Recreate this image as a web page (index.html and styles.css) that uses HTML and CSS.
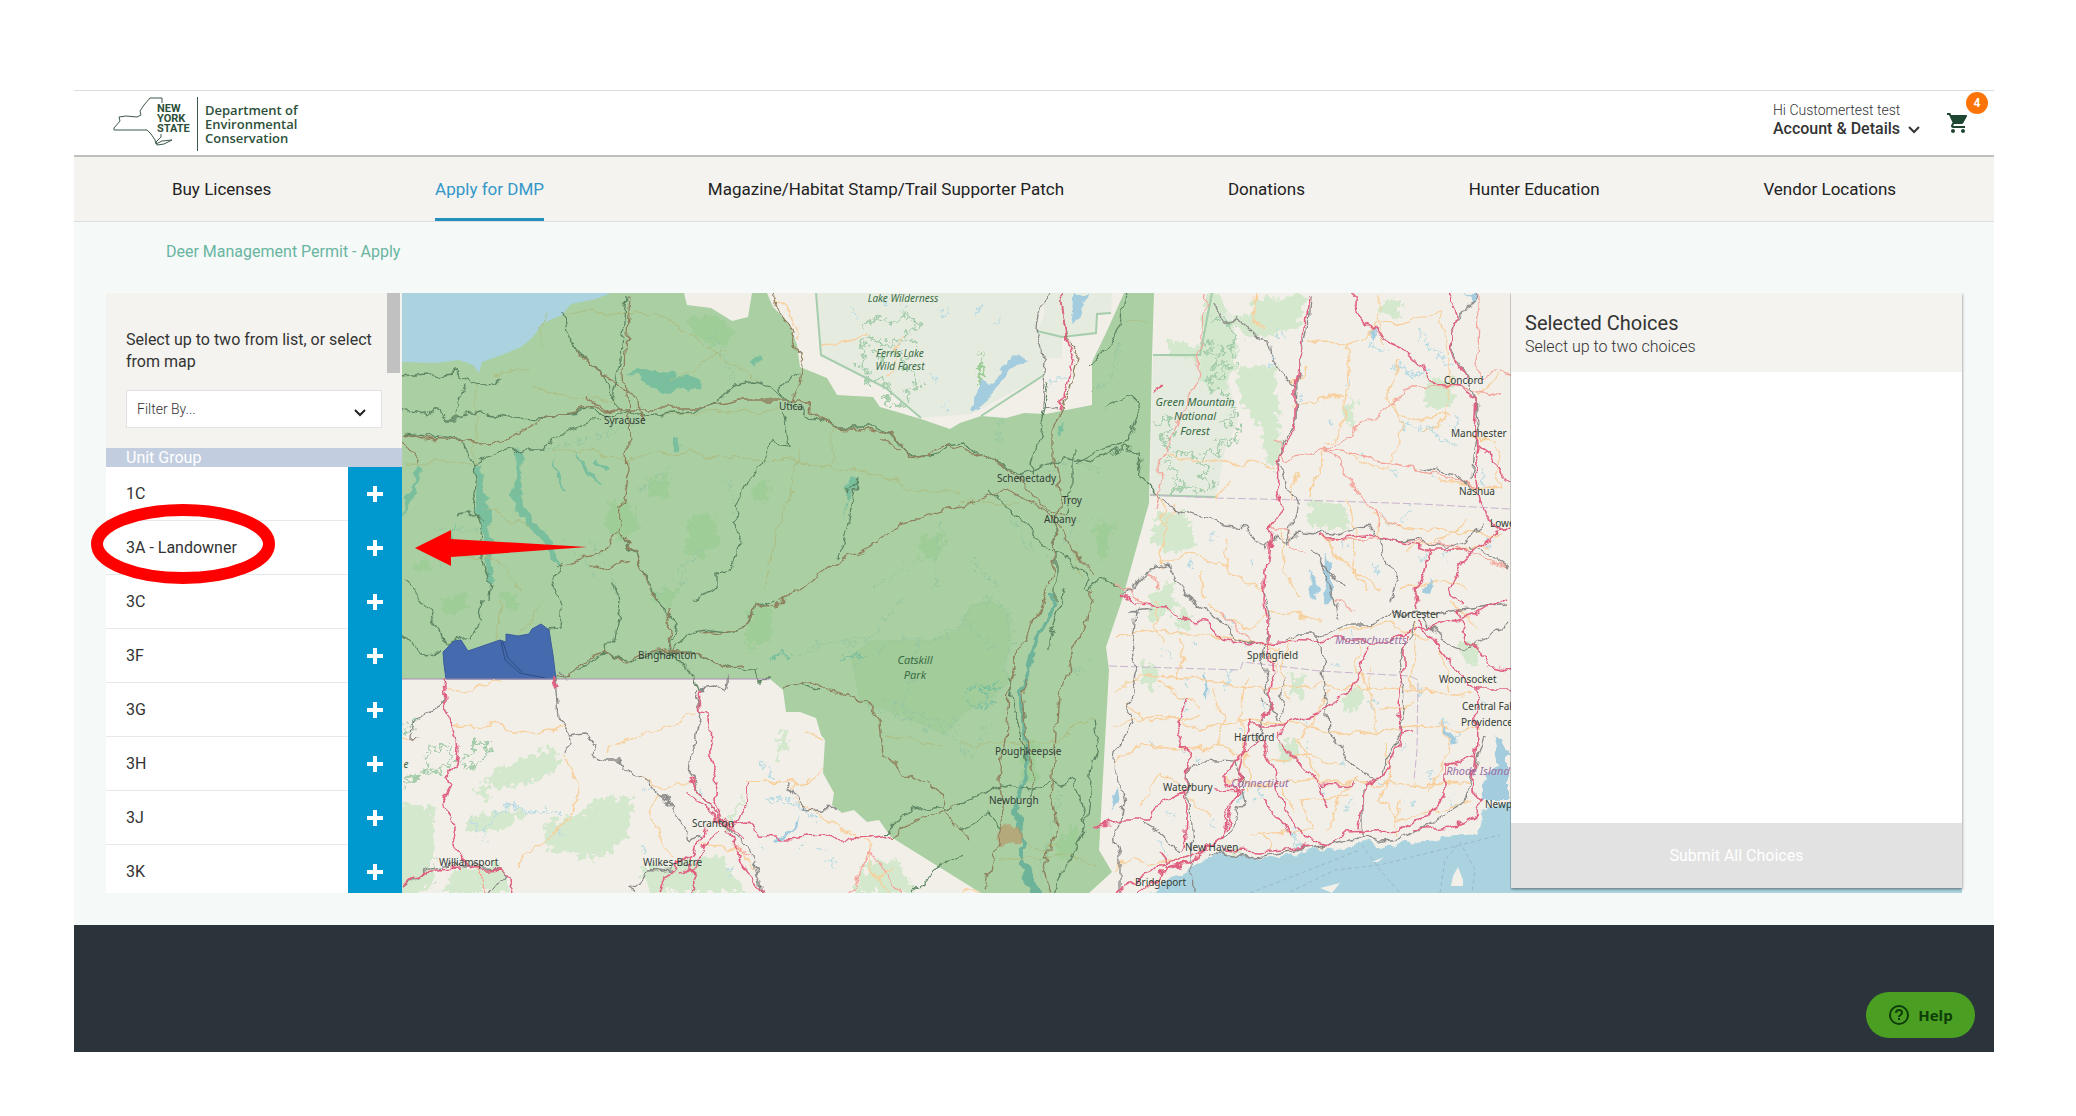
FILE: index.html
```html
<!DOCTYPE html>
<html lang="en">
<head>
    <meta charset="UTF-8">
    <title>Deer Management Permit - Apply</title>
    <link rel="stylesheet" href="styles.css">
</head>
<body>
<div class="page">
    <header class="header">
        <a href="#" class="logo">
            <svg class="logo-state" width="80" height="54" viewBox="0 0 80 54">
                <path d="M49 6V1H37L31 8L27 14L28 18L24 20L13 19L6 20L7 24L1 31V33H34L38 37L42 43L43 47L49 44L59 43L51 47L44 48L43 45L48 40V37" fill="none" stroke="#3d5a47" stroke-width="1"/>
                <text x="44" y="15">NEW</text>
                <text x="44" y="25">YORK</text>
                <text x="44" y="35">STATE</text>
            </svg>
            <span class="logo-name">Department of<br>Environmental<br>Conservation</span>
        </a>
        <div class="account">
            <button type="button" class="account-btn">
                <span class="hello">Hi Customertest test</span>
                <span class="details">Account &amp; Details
                    <svg width="12" height="8" viewBox="0 0 12 8"><path d="M1 1L6 6L11 1" fill="none" stroke="#333" stroke-width="2"/></svg>
                </span>
            </button>
            <a href="#" class="cart" aria-label="Cart">
                <svg width="24" height="24" viewBox="0 0 24 24"><path fill="#1e4630" d="M7 18c-1.1 0-1.99.9-1.99 2S5.900 22 7 22s2-.9 2-2-.9-2-2-2zM1 2v2h2l3.600 7.590-1.350 2.450c-.16.28-.25.61-.25.96 0 1.100.9 2 2 2h12v-2H7.420c-.14 0-.25-.11-.25-.25l.03-.12.9-1.630h7.450c.75 0 1.410-.41 1.750-1.030l3.580-6.490A1 1 0 0 0 20 4H5.210l-.94-2H1zm16 16c-1.100 0-1.990.9-1.990 2s.89 2 1.990 2 2-.9 2-2-.9-2-2-2z"/></svg>
                <span class="badge">4</span>
            </a>
        </div>
    </header>
    <nav class="nav">
        <a href="#">Buy Licenses</a>
        <a href="#" class="active">Apply for DMP</a>
        <a href="#">Magazine/Habitat Stamp/Trail Supporter Patch</a>
        <a href="#">Donations</a>
        <a href="#">Hunter Education</a>
        <a href="#">Vendor Locations</a>
    </nav>
    <main class="main">
        <h1>Deer Management Permit - Apply</h1>
        <div class="workspace">
            <div class="sidebar">
                <div class="filter">
                    <label for="filter">Select up to two from list, or select from map</label>
                    <div class="select-box">
                        <select id="filter">
                            <option>Filter By...</option>
                        </select>
                        <svg width="12" height="8" viewBox="0 0 12 8"><path d="M1 1L6 6L11 1" fill="none" stroke="#222" stroke-width="2"/></svg>
                    </div>
                </div>
                <div class="thumb"></div>
                <h2>Unit Group</h2>
                <ul class="units">
                    <li><span>1C</span><button type="button" aria-label="Add 1C"></button></li>
                    <li><span>3A - Landowner</span><button type="button" aria-label="Add 3A - Landowner"></button></li>
                    <li><span>3C</span><button type="button" aria-label="Add 3C"></button></li>
                    <li><span>3F</span><button type="button" aria-label="Add 3F"></button></li>
                    <li><span>3G</span><button type="button" aria-label="Add 3G"></button></li>
                    <li><span>3H</span><button type="button" aria-label="Add 3H"></button></li>
                    <li><span>3J</span><button type="button" aria-label="Add 3J"></button></li>
                    <li><span>3K</span><button type="button" aria-label="Add 3K"></button></li>
                </ul>
            </div>
            <div class="map">
                <svg viewBox="402 293 1560 600" preserveAspectRatio="xMinYMin slice">
                    <!-- makes roads, streams and shores wander like surveyed lines -->
                    <filter id="wander" filterUnits="userSpaceOnUse" x="392" y="283" width="1580" height="620">
                        <feTurbulence type="fractalNoise" baseFrequency="0.06" numOctaves="3" seed="4"/>
                        <feDisplacementMap in="SourceGraphic" scale="14" xChannelSelector="R" yChannelSelector="G"/>
                    </filter>
                    <filter id="wander-fine" filterUnits="userSpaceOnUse" x="392" y="283" width="1580" height="620">
                        <feTurbulence type="fractalNoise" baseFrequency="0.14" numOctaves="3" seed="9"/>
                        <feDisplacementMap in="SourceGraphic" scale="18" xChannelSelector="R" yChannelSelector="G"/>
                    </filter>
                    <rect x="402" y="293" width="1560" height="600" fill="#f2efe9"/>
                    <!-- parks and woods outside the units -->
                    <path class="park" d="M816 293L821 355L886 388L921 418L972 414L1044 375L1046 355L1037 331L1040 310L1048 293Z"/>
                    <path class="park" d="M1044 293V315L1037 331L1046 358H1062V337L1096 333L1097 314L1111 313L1112 293Z"/>
                    <path class="park" d="M1153 355H1200L1212 293L1232 315L1236 345L1228 378L1238 420L1225 450L1216 497L1150 495Z"/>
                    <g class="wood" filter="url(#wander-fine)">
                        <path d="M1225 320L1250 314L1255 300L1310 296L1295 330L1255 340ZM1236 368L1275 366L1278 410L1280 455L1268 470L1262 430L1240 400ZM1170 340L1200 345L1198 362L1170 358Z"/>
                        <path d="M1205 296L1224 294L1221 316L1234 335L1238 355L1228 385L1214 392L1199 380L1202 345ZM1160 510L1190 515L1195 545L1165 555L1150 540ZM1310 500L1345 505L1350 530L1308 527ZM1150 595L1173 580L1178 608L1150 625Z"/>
                        <path d="M392 805H433V885L392 903ZM480 780L518 760L550 748L562 765L540 780L500 788ZM475 790L490 785L488 800L474 795ZM465 820L505 810L530 812L500 830L468 832ZM543 825L580 815L600 795L633 798L628 835L600 860L550 852ZM455 870L500 862L510 893H440ZM640 868L720 855L745 893H650ZM780 735L790 728L786 750L775 760ZM853 893L870 860L900 862L915 893ZM740 800L748 790L735 820L722 835Z"/>
                        <path d="M1340 700L1360 685L1362 705L1350 712ZM1278 745L1295 740L1298 760L1282 762ZM1290 675L1305 678L1302 700L1292 695ZM1178 615L1190 605L1188 632L1176 630ZM1460 640L1480 645L1476 668L1464 662ZM1425 380L1455 378L1450 410L1425 408ZM1345 405L1355 400L1352 425L1344 420ZM1385 300H1400V318L1380 312ZM1140 660L1160 668L1155 690L1142 684ZM1225 850L1240 845L1238 862ZM1285 300L1300 298L1298 325L1286 330Z"/>
                    </g>
                    <g class="edge">
                        <path d="M816 293L821 355L886 388L921 418M981 416L1044 375M1153 355H1200L1212 293M1037 331L1062 337L1096 333L1097 314L1111 313M1216 497L1150 495"/>
                    </g>
                    <g class="edge" filter="url(#wander-fine)">
                        <path d="M861 327L880 317L895 324L907 315L920 325L905 335L917 342L898 340L885 345L870 337L860 345L866 355L858 365L870 372L865 385L880 380L892 390L886 402L902 408L910 398L905 388L920 385L915 372L902 370L905 358L893 352L880 358L872 350"/>
                        <path d="M1202 345L1213 340L1207 355L1220 350L1214 368L1228 362L1222 378L1206 375L1212 388L1228 395L1236 412L1222 422L1240 430L1232 447L1217 440L1220 455L1205 452L1198 462L1212 468L1200 478L1215 485L1196 492L1182 484L1172 495L1178 470L1165 462L1180 452L1195 458M1212 320L1224 318L1236 335L1230 350L1238 362M1155 425L1166 417L1173 430L1160 440L1172 448"/>
                        <path d="M402 785L428 770L426 752L450 745L455 757L440 770L402 780M404 725L415 718L414 730L402 735M461 765L475 745L490 742L480 760L468 768M483 760L494 748"/>
                    </g>
                    <g class="speck" filter="url(#wander-fine)">
                        <path d="M1180 400l4 3M1190 560l3 6M1210 540l5 -4M1250 560l4 4M1300 400l6 -5M1330 420l5 6M1350 380l-4 6M1390 370l10 -6l5 8l8 -3M1370 340l5 8l10 3M1395 365l20 12l15 -8M1420 330l8 18l15 10l8 12M1400 420l12 8l18 -2l10 14l20 6M1390 470l6 5M1430 470l10 8M1460 420l-8 10M1480 470l4 16M1410 510l-8 14M1385 520l8 4M1340 540l5 8M1375 560l3 12M1420 560l8 -6M1450 545l-6 14M1490 540l-4 10M1270 350l5 10l-6 8M1275 330l8 8M1365 450l-4 4"/>
                        <path d="M1135 610l4 6M1165 650l5 8M1195 640l-3 6M1225 615l5 10M1250 640l-4 7M1180 700l6 10M1190 680l-4 5M1230 670l-2 15M1260 700l4 8M1240 730l5 4M1300 720l8 5M1330 660l4 8M1350 630l4 5M1375 700l-4 8M1420 690l-3 7M1440 720l8 4M1460 730l-3 10M1480 700l6 6M1180 745l4 8M1150 740l5 6M1200 760l-5 6M1170 810l4 8M1160 840l5 12M1210 820l4 6M1240 800l5 -6M1260 790l-3 9M1320 790l5 8M1350 800l-2 9M1380 780l4 4M1410 800l5 6M1430 770l-5 6M1450 800l8 5M1310 740l-3 8M1340 760l4 6M1400 750l6 -5M1290 830l8 14l6 12"/>
                        <path d="M770 770l4 12M765 760l-4 8M645 845l-2 8M700 790l4 6M760 845l4 6M800 850l6 -5M820 850l5 -4M470 820l6 12M640 790l8 -4M560 835l5 3M730 870l-4 6M830 860l3 5M485 840V825L510 805L530 812L560 812M765 800L790 800L820 820"/>
                        <path d="M880 300l6 6M900 310l8 -4M935 310l8 5l6 -8M940 410l8 -8M930 375l8 8M850 310l6 10M1000 320l-8 6M1050 385l8 -8l10 4M985 300l-10 14"/>
                    </g>
                    <!-- green permit units -->
                    <path fill="#a9cfa3" d="M402 293H684L687 305L711 308L732 321L748 317L752 293H767L773 307L789 323L797 345L800 367L827 378L837 395L873 397L880 407L921 419L950 429L960 423L981 416L1006 418L1024 413L1046 414L1092 405V362L1106 333L1124 293H1154L1152 357L1149 503L1122 600L1106 647L1109 670L1103 777L1099 850L1112 872L1089 893H981L960 880L891 837L879 820L867 822L854 810L842 813L832 805L834 793L823 773L825 740L821 735L816 718L800 712L786 712L783 690L770 679H402Z"/>
                    <g class="grove" filter="url(#wander-fine)">
                        <path d="M685 320L715 315L735 330L725 348L700 340ZM610 500L635 505L640 530L620 540L605 525ZM690 520L710 510L720 540L700 560L685 550ZM755 485L770 480L768 500L755 500ZM920 540L945 530L940 560L922 562ZM440 600L465 592L470 610L445 615ZM505 590L520 600L510 612L500 600ZM750 610L775 605L770 640L745 650ZM1020 750L1035 740L1038 780L1024 785ZM1055 840L1075 825L1080 850L1060 860ZM415 560L430 560L428 572L416 572ZM650 590L680 590L670 605L655 605ZM645 480L670 475L665 500L650 495ZM980 350L985 380L978 385ZM1095 520L1115 525L1105 560L1095 550ZM985 600L1000 605L990 615Z"/>
                    </g>
                    <path fill="#a2cc9a" d="M850 655L872 640L895 640L930 640L960 628L970 605L990 600L1008 612L1012 640L1003 670L1012 678L990 700L965 712L945 735L900 715L860 702Z"/>
                    <path fill="#aad3df" d="M402 293H611L596 299L571 304L562 315L543 323L532 338L521 347L507 353L482 362L479 373L473 365L459 360L436 363L402 362Z"/>
                    <g fill="#79bf9e" filter="url(#wander)">
                        <path d="M631 371L646 372L655 370L700 378L702 390L690 393L680 390L670 392L660 388L642 384Z"/>
                        <path d="M474 462L481 464L483 490L490 515L491 545L493 570L495 582L489 585L486 565L483 535L476 500ZM516 448L523 458L522 480L524 505L532 520L545 535L555 545L560 565L549 553L532 530L514 510L511 490L517 478ZM553 455L560 480L567 492L562 490L555 475ZM574 447L582 460L595 475L602 486L594 480L582 466ZM594 455L607 470L604 472L596 463ZM419 462L423 470L418 482L408 505L404 515L405 498L416 480ZM849 478L858 480L852 497L846 505L844 520L848 500ZM455 517L452 540L440 570L450 540ZM674 435L681 438L680 450L674 448Z"/>
                        <path d="M1060 425l5 -5l1 8l-5 8zM750 360l8 -4l2 5l-6 6z"/>
                    </g>
                    <g fill="none" stroke="#79bf9e" filter="url(#wander-fine)">
                        <path d="M965 690L978 685L990 690L998 682M980 690L990 700L978 710L968 700M768 660L780 653L790 656M842 658L855 655L866 658" stroke-width="2"/>
                    </g>
                    <g filter="url(#wander)">
                        <path d="M1053 590L1052 612L1035 640L1028 670L1022 690L1026 720L1027 760L1020 790L1015 810L1022 835L1022 862L1037 893" fill="none" stroke="#6db39a" stroke-width="4"/>
                        <path d="M1020 855L1030 868L1042 898H1030Z" fill="#6db39a"/>
                        <path fill="#b89868" opacity=".7" d="M994 838L1002 826L1018 825L1024 835L1018 845L996 846Z"/>
                    </g>
                    <g class="minor-green" filter="url(#wander)">
                        <path d="M562 316L580 312L660 315L690 335L715 352L755 380M402 462H475M475 385V462M545 313L542 350M495 373L530 368M402 465L420 462M550 450L590 450L630 458L690 452L740 458L790 462L850 470L880 475L920 492H960M480 505L510 517L530 525M670 380L730 350M832 420V465M530 390L560 395L615 400M640 415L700 413L780 410M800 450L790 500L775 530L765 590"/>
                        <path d="M545 600L520 635L505 640M500 600L497 640M960 743H1000L1060 740L1075 725L1093 718M1000 860L1080 855L1095 868M1025 845L1060 850M885 735L910 740L940 745M960 500L1020 505M1128 320L1145 325M1075 540L1078 580M440 550L500 560L520 590"/>
                    </g>
                    <g class="stream" filter="url(#wander-fine)">
                        <path d="M720 470L732 490L735 520M640 490L670 470M650 600L700 550M480 530L440 530M640 420L590 440L540 450M560 540L585 560L590 575M870 590L920 560M710 330L735 380M590 540L605 560L620 600M1035 480L1070 460L1100 470M1000 420V460M1050 560L1080 520M1010 510L1030 550M1065 680L1095 660M900 600L870 640L820 645L800 655M880 700L950 725L970 760L990 720M920 640L900 720M960 620L1010 660M970 560L1000 590M1060 790L1040 880M940 520L935 590M690 560L680 590M1120 340L1110 380L1090 390"/>
                        <path d="M855 664L895 640L930 640L960 628L970 605L990 600L1008 612L1012 640L1003 670L1012 678L990 700L965 712L945 735L860 702"/>
                    </g>
                    <g class="rail-green" filter="url(#wander)">
                        <path d="M402 376L458 372L472 383L482 386L495 385L502 376M402 412L416 410L425 416L436 410L446 418L458 418L470 414L482 412L495 415L510 418L540 419L560 414L590 411L613 415L628 409L642 415L690 412L715 403L735 385L752 382L770 386L788 402L810 415L835 427L870 427L893 435L905 452L920 458L935 455L947 445L962 443L985 455L1020 475L1040 468L1068 455L1095 460L1125 445L1137 455L1140 475L1160 495"/>
                        <path d="M402 433L428 436L460 440L475 462L473 500L482 525L480 545L484 565L490 585L488 600M475 462L490 455L505 450L513 447L520 455L530 450L545 450L553 437L570 430L600 420M465 383L455 415M563 310L570 340L585 360L605 378L617 410M627 293L622 360L612 400M485 520L470 513L458 515M783 410L789 445L772 442L760 465L748 480L737 505L743 510L733 522L739 535L738 555L730 570L718 575L718 590L695 600M555 565L562 560L552 580L560 600L558 628L548 630"/>
                        <path d="M620 530L635 555L650 585L655 600L675 625L670 650L678 660L690 672L697 690M402 580L420 598L438 625L442 640L452 642L470 635L480 620L482 600M402 633L412 640L420 653L442 652M778 600L755 607L745 625L730 633L700 630L690 635L675 650M603 654L615 640L618 620L620 600L612 580"/>
                        <path d="M557 678L580 670L592 657L604 654L620 658L635 660L660 653L690 652L710 660L735 668L745 672L757 668L760 680L770 679M1134 395L1105 408M1134 395L1137 420L1128 442L1105 448L1078 460M1048 380L1040 430L1030 475M1073 450V490L1065 515M990 490L1010 510L1050 550L1083 570L1092 590L1100 577L1125 590M1065 590L1048 640L1048 650M1056 520V600M1008 680L1020 730L1026 760M1094 720L1097 745L1090 780L1086 828L1073 850L1054 893M1086 828L1076 780L1060 785L1050 780L1030 795M960 805L1000 785L1040 790M960 830L985 815L1000 830"/>
                        <path d="M849 490L858 480L848 525L843 545L838 557M1124 293L1120 325L1108 345L1092 365M783 690L800 685L820 690M788 402L780 390L790 375L800 370M885 835L910 808L940 805L955 810M960 855L935 870L910 893"/>
                    </g>
                    <g class="road-green" filter="url(#wander)">
                        <path d="M402 434L430 439L455 441L475 443L500 440L525 430L545 417L580 410L622 408L700 408L740 400L785 400L800 400L830 427L860 430L893 434L910 457L925 458L940 445L960 448M630 293L626 370L628 420L630 470L622 510L619 528L635 553L650 590L658 605M773 293L777 310L790 325L797 345L802 365L800 385L792 400M575 350L600 375L640 398L642 420M586 395L595 405L620 410"/>
                        <path d="M960 505L940 510L920 520L900 525L880 540L855 555L840 560L820 575L800 587L775 605L755 607L745 625L720 635L700 632M960 448L985 455L1015 475L1030 490L1050 510L1065 515M666 605L668 625L672 650M554 678L575 672L590 655L603 652L625 662L640 655L665 650L700 655L730 668L745 667M783 690L810 682L845 695L865 700L880 720L883 755L900 770L925 782L940 795L950 820L970 840M1060 293L1065 330L1078 355L1068 395L1053 430L1053 460L1060 495L1058 515L1055 560L1044 600L1018 650L1008 690L1005 740L1000 780L1003 820L995 850L985 893M1094 590L1080 640L1062 680L1058 720L1055 760L1052 800L1055 830L1045 870L1050 893M960 506L1010 490L1045 508L1062 530L1075 555L1095 575M891 837L925 815L960 805M402 438L417 460M880 440L900 450M630 560L590 570M1024 680L1030 760L1035 790M619 530L600 555L560 565"/>
                    </g>
                    <!-- blue unit on the state line -->
                    <path fill="#456aad" stroke="#3c5d9c" d="M443 652L454 641L461 640L468 651L500 640L506 642V634L518 636L529 634L532 629L541 624L549 630L553 655L556 679H446L444 665Z"/>
                    <path d="M501 641L505 660L520 673L545 678M503 642L508 658L522 672" fill="none" stroke="#2e4d83"/>
                    <path d="M402 679H770" stroke="#a88fae" fill="none"/>
                    <!-- sound and lakes -->
                    <g filter="url(#wander)">
                        <path fill="#aad3df" d="M1135 903L1160 883L1188 870L1205 858L1217 853L1240 857L1275 858L1300 854L1317 848L1340 850L1362 843L1380 848L1402 843L1420 846L1445 837L1474 834L1482 815L1500 805L1972 803V903Z"/>
                        <path fill="#a3cddf" d="M1075 293H1086L1080 320L1071 327ZM974 395L982 378L990 385L1000 370L1015 355L1030 358L1010 368L995 391L985 405L974 413ZM1325 553L1332 565V600L1323 605ZM1312 570L1318 590L1316 600L1311 590ZM1369 330L1372 328L1371 342L1368 340ZM1420 590L1434 578L1430 595L1422 596ZM1204 675L1207 672L1206 700L1203 695ZM1112 795L1118 785L1120 805L1115 812ZM1492 735L1510 750V800H1482L1484 775L1500 765ZM1468 293H1476L1472 302ZM1440 720L1455 740L1450 745ZM772 845L785 838L795 828L800 815L790 830L778 838Z"/>
                    </g>
                    <path d="M1451 886L1453 876L1458 867L1463 880V886ZM1320 888L1340 883L1332 893ZM1372 862L1384 857L1378 862Z" fill="#f2efe9"/>
                    <path d="M1290 892L1335 870L1380 865L1420 855L1500 835M1362 845L1380 870L1400 893M1440 893L1445 860L1460 842L1475 870L1472 893M1250 893L1360 850" fill="none" stroke="#98b8cf" stroke-dasharray="4 3"/>
                    <path class="border" d="M1150 495L1216 498L1300 500L1420 504L1510 509M1109 666L1240 670L1243 662L1320 671L1410 676L1418 680L1417 750L1414 780"/>
                    <g class="secondary" filter="url(#wander)">
                        <path d="M448 688L462 694L480 685L500 680M455 725L485 727L500 725L520 735L555 730L565 728M610 755L612 745L640 735L675 722L698 711M565 752L577 780L578 800L565 825L545 845L525 852L518 870M640 775L665 790L690 782M660 795L650 815L658 840L675 860M745 781L775 780L800 785L823 772M795 800L830 820L860 840L870 845M805 735L822 737M477 868L487 893M418 740L402 735M795 790L810 775M870 845V870L890 893M700 845L740 850L755 870M895 865L880 880"/>
                        <path d="M1255 293L1252 320L1262 330M1312 340L1350 341H1365L1372 325L1395 323L1420 318L1440 312M1350 341L1345 420L1335 440L1325 445M1325 450L1310 495M1160 455L1200 460L1230 465L1255 461L1275 470M1345 455L1385 470L1400 440L1395 400M1160 565L1185 555L1215 562L1240 580L1265 590M1160 495L1165 530L1160 570M1175 505L1165 530L1160 565M1280 530L1285 570L1300 595M1322 535L1340 560L1372 580L1380 593M1372 515L1400 525L1440 530L1500 535M1440 310L1450 380L1445 420L1425 430M1450 550L1490 545M1480 395L1500 375M1310 365L1290 385M1400 360L1385 400L1405 420L1450 415M1440 480L1500 490L1495 440L1470 435M1375 510L1380 540M1405 550L1440 540L1470 520M1215 500L1230 480"/>
                        <path d="M1115 638L1150 630L1200 635L1240 640L1280 648M1113 690L1150 675L1200 680L1260 690L1320 685L1400 690L1470 695M1113 725L1160 715L1200 730L1250 720L1300 725L1350 735L1420 725L1480 730M1113 765L1140 745L1190 750L1220 745L1250 760M1160 680L1175 695L1200 705M1245 680L1240 720L1250 790M1370 670L1375 730M1415 620L1412 690M1330 690L1300 740L1320 780M1150 720L1180 720L1200 715M1225 780L1260 785L1310 780L1400 785L1470 782M1250 835L1310 830L1300 800L1350 795M1140 805L1160 770L1180 790M1330 830L1340 790L1360 780M1430 790L1450 750L1440 720M1470 800L1400 820L1380 800M1205 605L1250 630L1270 610L1320 620M1340 630L1390 625L1430 640M1290 640L1280 670L1290 700M1450 600L1480 630M1160 640L1155 600M1115 870L1130 855L1150 865L1180 860M1380 710L1415 700"/>
                        <path d="M775 300L790 310L800 340M905 335L895 350L890 380M820 345L850 340L870 335M960 890L980 893"/>
                        <path d="M1380 293L1375 320L1385 345M1290 410L1320 400L1345 395M1300 470L1290 500M1345 500L1360 530L1350 560L1370 590M1200 570L1205 600M1230 540L1225 570M1400 590L1440 580L1470 590M1180 640L1185 660L1175 680M1210 690L1225 720L1215 745M1270 640L1275 670M1360 640L1355 670L1370 690M1385 740L1390 770L1380 800M1130 700L1145 720M1285 790L1295 815M1260 830L1270 850M1400 800L1395 835M1190 800L1210 815M1440 650L1450 690M1270 760L1310 755L1340 765"/>
                    </g>
                    <g class="trunk" filter="url(#wander)">
                        <path d="M1275 440L1285 460L1325 450L1345 440L1370 420L1395 405L1405 390L1420 387L1465 388L1500 395M1325 450L1350 480L1365 505L1375 512L1400 525M1325 450L1360 455L1400 465L1440 475L1475 485M1205 293L1203 330L1196 385L1180 420L1165 455L1158 460L1160 480L1155 510M1115 583L1145 605L1165 607M1480 380L1495 370L1510 376M1478 295L1477 375M1335 600L1355 610M1148 570L1160 590M1220 610L1250 640M1325 540L1370 540L1450 545L1510 570M1375 510L1380 530M1270 530H1290L1288 545L1305 555M870 850L900 893M870 850L850 893M477 868L487 893M735 848L750 855"/>
                    </g>
                    <g class="rail" filter="url(#wander)">
                        <path d="M568 679L559 670M556 679L559 720L570 735L572 745L565 750M570 735L585 733L593 745L590 755L605 762L620 762L630 775L645 778L655 790L670 802L675 815L687 828L690 840L700 835M448 697L425 715L415 720L414 738L418 740M402 889L430 868L450 865L500 868L505 875L490 893M695 690L701 708L692 750L690 775L708 805L718 815M635 893L630 890L650 870L672 868M720 815L735 835L750 850L760 880L762 893M790 785L800 800L805 810L835 808M697 690L715 688L725 690L728 675"/>
                        <path d="M1048 293L1040 310L1037 331L1046 360L1042 404L1058 408M1213 302L1222 320L1240 320L1255 335L1270 338L1272 365L1285 380L1297 388M1160 495L1168 508L1180 511L1205 518L1225 526L1245 528L1265 548L1268 542L1275 535L1285 545L1300 530L1330 535L1345 530L1365 525L1380 540L1400 542L1420 540L1445 548L1465 540L1485 527M1310 293L1308 330L1297 380L1296 425L1282 445L1278 462L1288 485L1297 500L1290 530L1285 545M1477 293L1462 315L1453 330L1452 350L1465 375L1478 398L1480 425L1475 445L1472 480M1423 467L1455 475L1475 490M1380 540L1385 560L1395 580L1390 600M1470 545L1485 553L1510 570M1125 595L1145 570L1170 565L1178 580L1185 595L1205 610L1225 625L1235 640L1260 645"/>
                        <path d="M1130 612L1152 610M1135 612L1132 640L1138 670L1132 690L1130 725L1115 750L1113 770L1122 785L1125 805L1120 820L1113 830L1120 855V893M1140 822L1160 833L1180 850M1192 893L1188 770L1205 758L1235 760L1240 780L1245 800L1230 830L1220 842M1265 590L1270 620L1262 660L1270 700L1258 740M1320 635L1325 690L1328 730L1345 750L1355 770L1378 778L1390 760L1402 730L1405 690L1400 660L1415 620M1210 852L1250 858L1290 852L1310 848L1340 842L1362 838L1380 842L1400 838L1420 830L1440 815L1465 800L1475 770L1485 735M1362 838L1362 790M1425 620L1440 640L1465 650L1490 640L1510 620M1320 635L1345 625L1370 625L1390 615L1440 612L1510 605M1285 640L1300 635L1320 635M1310 550L1345 590M1260 700L1280 720L1285 675M1320 560L1340 620"/>
                    </g>
                    <g class="motorway" filter="url(#wander)">
                        <path d="M445 679L448 700L444 708L453 725L457 745L455 765L448 775L450 785L443 805L458 825L452 845L460 860L475 870L500 868L512 880L508 893M402 889L415 877L435 869L460 868M552 679L558 690L554 682M699 690L701 710L709 715L710 755L717 775L713 800L720 815L735 828L745 802L748 782M689 778L705 800L720 818M705 825L700 840L690 855L665 875L660 893M720 830L705 845L695 865L680 872M728 830L740 860L755 880L765 893M735 825L745 823L760 836L790 838L820 835L860 840L891 836M690 855L694 893M690 793L712 815L728 825L745 840"/>
                        <path d="M1060 293L1065 330L1073 355L1063 400L1060 410M1308 293L1303 350L1295 385L1295 430L1285 445L1277 462L1278 490L1281 512L1270 530L1267 560L1264 600L1268 620L1268 650L1272 680L1270 705L1263 720M1354 293V308L1370 328L1390 340L1410 355L1425 370L1435 385L1462 388L1478 398L1476 430L1479 445L1475 475L1480 500L1490 520L1505 530M1450 293L1457 320L1450 350L1465 378M1478 440L1490 460L1510 480M1320 536L1330 540L1365 535L1400 543L1430 550L1475 550L1500 530L1510 525M1430 550L1425 570L1415 590L1418 610M1475 550L1460 565L1450 590L1462 605M1155 395L1162 385"/>
                        <path d="M1122 595L1135 605L1170 607L1185 620L1205 622L1220 640L1250 645L1275 642L1310 643L1330 640L1390 640L1410 630L1440 625L1510 600M1405 635L1405 670L1398 700L1402 735L1390 770L1365 785L1362 800L1358 830M1370 645L1350 690L1320 713L1290 723L1275 740M1275 740L1300 765L1320 783L1355 785M1320 785L1328 808M1262 740L1290 820L1310 840L1330 845L1345 832L1400 830L1430 815L1445 795L1445 765L1475 758M1260 740L1235 760L1225 780L1240 790L1228 810L1220 840L1190 863L1165 870L1140 893M1222 840L1205 850L1160 867L1130 885L1115 893M1188 700L1177 725L1188 760L1187 790L1183 850M1188 790L1165 800L1150 820L1120 820L1094 828M1250 720L1240 770L1235 800L1225 830M1222 850L1260 852L1310 848M1418 620L1440 650L1460 675L1475 690L1478 740L1473 790L1482 800L1478 815L1460 825L1415 830M1458 610L1465 640L1490 665L1510 670M1475 690L1510 690M1403 735L1415 732M1250 725L1290 725M1215 787L1245 788M1158 855L1168 868L1190 862M1265 800L1290 835"/>
                    </g>
                    <g class="town">
                        <text x="604" y="424">Syracuse</text>
                        <text x="779" y="410">Utica</text>
                        <text x="997" y="482">Schenectady</text>
                        <text x="1062" y="504">Troy</text>
                        <text x="1044" y="523">Albany</text>
                        <text x="638" y="659">Binghamton</text>
                        <text x="995" y="755">Poughkeepsie</text>
                        <text x="989" y="804">Newburgh</text>
                        <text x="692" y="827">Scranton</text>
                        <text x="643" y="866">Wilkes-Barre</text>
                        <text x="439" y="866">Williamsport</text>
                        <text x="1444" y="384">Concord</text>
                        <text x="1451" y="437">Manchester</text>
                        <text x="1459" y="495">Nashua</text>
                        <text x="1490" y="527">Lowell</text>
                        <text x="1392" y="618">Worcester</text>
                        <text x="1247" y="659">Springfield</text>
                        <text x="1439" y="683">Woonsocket</text>
                        <text x="1462" y="710">Central Falls</text>
                        <text x="1461" y="726">Providence</text>
                        <text x="1234" y="741">Hartford</text>
                        <text x="1163" y="791">Waterbury</text>
                        <text x="1485" y="808">Newport</text>
                        <text x="1185" y="851">New Haven</text>
                        <text x="1135" y="886">Bridgeport</text>
                    </g>
                    <g class="forest">
                        <text x="903" y="302" class="small">Lake Wilderness</text>
                        <text x="900" y="357" class="small">Ferris Lake</text>
                        <text x="900" y="370" class="small">Wild Forest</text>
                        <text x="1195" y="406">Green Mountain</text>
                        <text x="1195" y="420">National</text>
                        <text x="1195" y="435">Forest</text>
                        <text x="915" y="664">Catskill</text>
                        <text x="915" y="679">Park</text>
                        <text x="406" y="768" class="small">e</text>
                    </g>
                    <g class="state">
                        <text x="1371" y="644">Massachusetts</text>
                        <text x="1260" y="787">Connecticut</text>
                        <text x="1478" y="775">Rhode Island</text>
                    </g>
                </svg>
            </div>
            <section class="choices">
                <div class="choices-head">
                    <h2>Selected Choices</h2>
                    <p>Select up to two choices</p>
                </div>
                <div class="choices-list"></div>
                <button type="button" class="submit" disabled>Submit All Choices</button>
            </section>
            <svg class="mark-circle" width="184" height="80" viewBox="0 0 184 80"><ellipse cx="92" cy="40" rx="86" ry="34" fill="none" stroke="#f00" stroke-width="12"/></svg>
            <svg class="mark-arrow" width="172" height="36" viewBox="0 0 172 36"><path d="M0 18L36 0V9L172 17L36 27V36Z" fill="#f00"/></svg>
        </div>
    </main>
    <footer class="footer">
        <button type="button" class="help">
            <svg width="22" height="22" viewBox="0 0 22 22" fill="none" stroke="#0d3d08" stroke-width="2"><circle cx="11" cy="11" r="9"/><path d="M8 9C8 5 14 5 14 9C14 11 11 11 11 13M11 14V16"/></svg>
            Help
        </button>
    </footer>
</div>
</body>
</html>
```
FILE: styles.css
```css
* {
    box-sizing: border-box;
}

body {
    margin: 0;
    background: #fff;
    font-family: Roboto, Arial, sans-serif;
    font-size: 16px;
    color: #333;
}

button {
    font-family: inherit;
    border: none;
    cursor: pointer;
}

.page {
    margin: 90px 82px 64px 74px;
    border-top: 1px solid #ddd;
}

.header {
    display: flex;
    justify-content: space-between;
    height: 66px;
    padding: 6px 6px 0 39px;
    border-bottom: 2px solid #bfbfbf;
}

.logo {
    display: flex;
    height: 54px;
    text-decoration: none;
    color: #2c5039;
}

.logo-state text {
    font: bold 11px Roboto, sans-serif;
    fill: #2c5039;
}

.logo-name {
    margin-left: 4px;
    padding: 6px 0 0 7px;
    border-left: 1px solid #3d5a47;
    font: 600 13px/14px "Open Sans", sans-serif;
}

.account {
    display: flex;
    gap: 26px;
}

.account-btn {
    align-self: flex-start;
    padding: 4px 0 0;
    background: none;
    text-align: left;
    color: #333;
}

.hello {
    display: block;
    font-size: 14px;
    line-height: 18px;
    font-weight: 300;
}

.details {
    display: block;
    font-size: 16px;
    line-height: 20px;
    font-weight: 500;
}

.details svg {
    margin-left: 4px;
}

.cart {
    position: relative;
    width: 42px;
    padding-top: 14px;
}

.badge {
    position: absolute;
    top: -5px;
    right: 0;
    width: 22px;
    height: 22px;
    border-radius: 50%;
    background: #fc7307;
    color: #fff;
    font-size: 12px;
    line-height: 22px;
    font-weight: bold;
    text-align: center;
}

.nav {
    display: flex;
    justify-content: space-around;
    height: 65px;
    padding: 0 16px;
    background: #f4f3f0;
    border-bottom: 1px solid #ddd;
}

.nav a {
    font-size: 17px;
    line-height: 64px;
    color: #222;
    text-decoration: none;
}

.nav .active {
    color: #3397c8;
    border-bottom: 3px solid #2191bb;
}

.main {
    padding: 16px 32px 32px;
    background: #f5f9f8;
}

h1 {
    margin: 0 0 27px 60px;
    font-size: 16px;
    line-height: 28px;
    font-weight: normal;
    color: #69b5a2;
}

.workspace {
    position: relative;
    display: flex;
    height: 600px;
}

.sidebar {
    position: relative;
    flex: 0 0 296px;
    background: #fff;
    overflow: hidden;
}

.filter {
    padding: 36px 20px 20px;
    background: #f4f3f0;
}

.filter label {
    display: block;
    line-height: 22px;
}

.select-box {
    position: relative;
    margin-top: 17px;
}

.select-box select {
    display: block;
    width: 100%;
    height: 38px;
    padding: 0 10px;
    appearance: none;
    background: #fff;
    border: 1px solid #e2e2e2;
    font: 300 14px Roboto, sans-serif;
    color: #333;
}

.select-box svg {
    position: absolute;
    right: 16px;
    top: 19px;
}

.thumb {
    position: absolute;
    top: 0;
    right: 2px;
    width: 13px;
    height: 80px;
    background: #c1c1c1;
}

.sidebar h2 {
    margin: 0;
    padding-left: 20px;
    background: #c2cde0;
    color: #fff;
    font-size: 16px;
    line-height: 19px;
    font-weight: normal;
}

.units {
    margin: 0;
    padding: 0;
    list-style: none;
}

.units li {
    display: flex;
    justify-content: space-between;
    height: 54px;
    line-height: 54px;
}

.units span {
    flex: 1;
    padding-left: 20px;
    border-bottom: 1px solid #e8e8e8;
}

.units button {
    width: 54px;
    background:
        linear-gradient(#fff, #fff) center / 16px 4px no-repeat,
        linear-gradient(#fff, #fff) center / 4px 16px no-repeat,
        #0099cf;
}

.map {
    flex: 1;
    min-width: 0;
    overflow: hidden;
}

.map svg {
    display: block;
    width: 100%;
    height: 100%;
}

.park { fill: #e6ebe0; }
.wood { fill: #d3e8cc; }
.edge { fill: none; stroke: #a5cdab; stroke-width: 2; }
.speck { fill: none; stroke: #bcdce4; stroke-width: 2; }
.grove { fill: #9fcd98; }
.stream { fill: none; stroke: #93c5a0; }
.minor-green { fill: none; stroke: #adbd80; }
.rail-green { fill: none; stroke: #5d8562; stroke-width: 1.3; }
.road-green { fill: none; stroke: #8f7f5c; stroke-width: 1.3; }
.border { fill: none; stroke: #c9b3cf; stroke-dasharray: 8 3; }
.secondary { fill: none; stroke: #f8cf9a; stroke-width: 1.3; }
.trunk { fill: none; stroke: #f3a59b; stroke-width: 1.3; }
.rail { fill: none; stroke: #8b8987; stroke-width: 1.3; }
.motorway { fill: none; stroke: #e0607f; stroke-width: 1.6; }

.town,
.state,
.forest {
    font-family: "Noto Sans", sans-serif;
    font-size: 10px;
    fill: #333d36;
}

.state {
    font-style: italic;
    font-size: 11px;
    text-anchor: middle;
    fill: #9a70a5;
}

.forest {
    font-style: italic;
    font-size: 11px;
    text-anchor: middle;
    fill: #396b45;
}

.small {
    font-size: 10px;
}

.choices {
    position: absolute;
    top: 0;
    right: 0;
    bottom: 5px;
    width: 451px;
    display: flex;
    flex-direction: column;
    background: #fff;
    box-shadow: 0 1px 3px rgba(0, 0, 0, 0.5);
    clip-path: inset(0 -3px -3px -1px);
}

.choices-head {
    height: 79px;
    padding: 18px 14px 0;
    background: #f4f3f0;
}

.choices-head h2 {
    margin: 0;
    font-size: 20px;
    line-height: 24px;
    font-weight: normal;
}

.choices-head p {
    margin: 0;
    font-size: 16px;
    line-height: 24px;
    font-weight: 300;
}

.choices-list {
    flex: 1;
}

.submit {
    height: 65px;
    background: #e2e2e2;
    color: #fff;
    font-size: 16px;
}

.mark-circle {
    position: absolute;
    left: -15px;
    top: 211px;
}

.mark-arrow {
    position: absolute;
    left: 309px;
    top: 237px;
}

.footer {
    display: flex;
    justify-content: flex-end;
    align-items: flex-end;
    height: 127px;
    padding: 0 19px 14px;
    background: #2a343a;
}

.help {
    display: flex;
    align-items: center;
    justify-content: center;
    gap: 8px;
    width: 109px;
    height: 46px;
    border-radius: 23px;
    background: #4a9e22;
    color: #0d3d08;
    font: bold 15px "Open Sans", sans-serif;
}
```
